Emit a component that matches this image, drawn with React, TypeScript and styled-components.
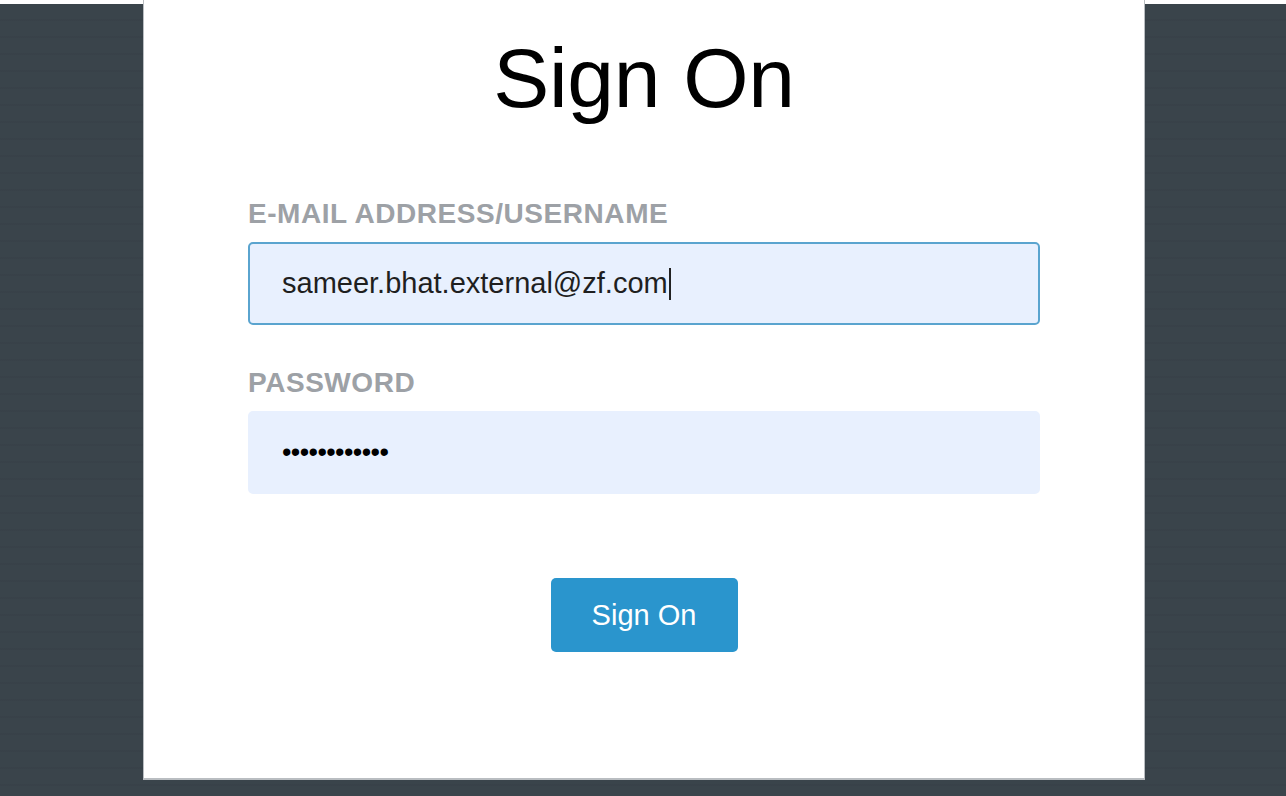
import React from "react";
import styled, { createGlobalStyle } from "styled-components";

const Global = createGlobalStyle`
  html, body { margin: 0; padding: 0; }
  body {
    background: #3a444b;
    font-family: "Liberation Sans", Arial, Helvetica, sans-serif;
  }
`;

const Page = styled.div`
  min-height: 796px;
  box-sizing: border-box;
  border-top: 4px solid #ffffff;
  background: repeating-linear-gradient(
    to bottom,
    #3a444b 0px,
    #3a444b 15px,
    #373f47 16px,
    #3a444b 17px
  );
  display: flex;
  justify-content: flex-start;
  padding: 0 0 18px 143px;
`;

const Card = styled.div`
  width: 1000px;
  height: 774px;
  margin-top: -4px;
  padding-top: 4px;
  background: #ffffff;
  border-left: 1px solid #b9bdc1;
  border-right: 1px solid #b9bdc1;
  border-bottom: 2px solid #b9bdc1;
  display: flex;
  flex-direction: column;
  align-items: center;
`;

const Title = styled.h1`
  margin: 26px 0 0;
  font-size: 84px;
  font-weight: 400;
  line-height: 96px;
  color: #000000;
  letter-spacing: -0.3px;
`;

const Form = styled.form`
  width: 792px;
  margin-top: 72px;
  display: flex;
  flex-direction: column;
`;

const Label = styled.label`
  font-size: 28px;
  font-weight: 700;
  line-height: 32px;
  color: #9da1a6;
  margin-bottom: 12px;
  letter-spacing: 0.55px;
`;

const Input = styled.div<{ $focused?: boolean }>`
  box-sizing: border-box;
  height: 83px;
  background: #e8f0fe;
  border-radius: 5px;
  border: 2px solid ${(p) => (p.$focused ? "#5aa4cf" : "#e8f0fe")};
  padding: 0 32px;
  display: flex;
  align-items: center;
  font-size: 29px;
  color: #1f1f1f;
  margin-bottom: 42px;
`;

const Caret = styled.span`
  display: inline-block;
  width: 2px;
  height: 32px;
  background: #222;
  margin-left: 1px;
`;

const Dots = styled.span`
  font-size: 27px;
  letter-spacing: -0.6px;
  color: #000;
`;

const ButtonRow = styled.div`
  display: flex;
  justify-content: center;
  margin-top: 42px;
`;

const Button = styled.button`
  width: 187px;
  height: 74px;
  border: none;
  border-radius: 5px;
  background: #2a95cd;
  color: #ffffff;
  font-family: "Liberation Sans", Arial, sans-serif;
  font-size: 29px;
`;

export default function App() {
  return (
    <>
      <Global />
      <Page>
        <Card>
          <Title>Sign On</Title>
          <Form onSubmit={(e) => e.preventDefault()}>
            <Label>E-MAIL ADDRESS/USERNAME</Label>
            <Input $focused>
              sameer.bhat.external@zf.com
              <Caret />
            </Input>
            <Label>PASSWORD</Label>
            <Input>
              <Dots>••••••••••••</Dots>
            </Input>
            <ButtonRow>
              <Button type="submit">Sign On</Button>
            </ButtonRow>
          </Form>
        </Card>
      </Page>
    </>
  );
}
